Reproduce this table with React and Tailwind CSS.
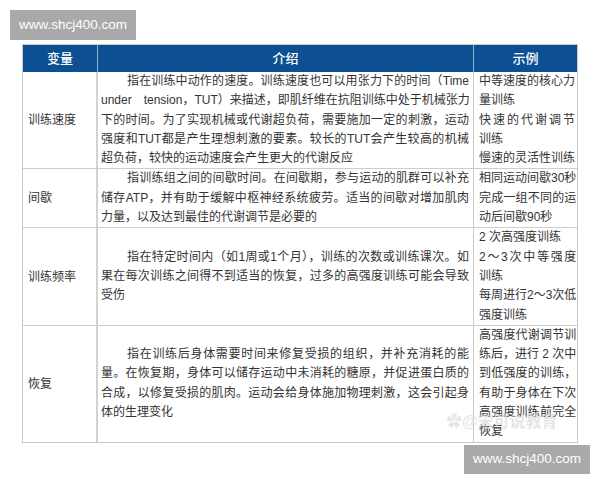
const rows = [
  {
    name: "训练速度",
    intro: [
      "指在训练中动作的速度。训练速度也可以用张力下的时间（Time",
      "under　tension，TUT）来描述，即肌纤维在抗阻训练中处于机械张力",
      "下的时间。为了实现机械或代谢超负荷，需要施加一定的刺激，运动",
      "强度和TUT都是产生理想刺激的要素。较长的TUT会产生较高的机械",
      "超负荷，较快的运动速度会产生更大的代谢反应",
    ],
    example: [
      ["中等速度的核心力", true],
      ["量训练", false],
      ["快速的代谢调节", true],
      ["训练", false],
      ["慢速的灵活性训练", true],
    ],
  },
  {
    name: "间歇",
    intro: [
      "指训练组之间的间歇时间。在间歇期，参与运动的肌群可以补充",
      "储存ATP，并有助于缓解中枢神经系统疲劳。适当的间歇对增加肌肉",
      "力量，以及达到最佳的代谢调节是必要的",
    ],
    example: [
      ["相同运动间歇30秒", true],
      ["完成一组不同的运", true],
      ["动后间歇90秒", false],
    ],
  },
  {
    name: "训练频率",
    intro: [
      "指在特定时间内（如1周或1个月），训练的次数或训练课次。如",
      "果在每次训练之间得不到适当的恢复，过多的高强度训练可能会导致",
      "受伤",
    ],
    example: [
      ["2 次高强度训练", false],
      ["2～3次中等强度", true],
      ["训练", false],
      ["每周进行2～3次低", true],
      ["强度训练", false],
    ],
  },
  {
    name: "恢复",
    intro: [
      "指在训练后身体需要时间来修复受损的组织，并补充消耗的能",
      "量。在恢复期，身体可以储存运动中未消耗的糖原，并促进蛋白质的",
      "合成，以修复受损的肌肉。运动会给身体施加物理刺激，这会引起身",
      "体的生理变化",
    ],
    example: [
      ["高强度代谢调节训", true],
      ["练后，进行 2 次中", true],
      ["到低强度的训练，", true],
      ["有助于身体在下次", true],
      ["高强度训练前完全", true],
      ["恢复", false],
    ],
  },
]

const font = "font-['Liberation_Sans','Noto_Sans_CJK_SC',sans-serif]"

const Line = ({ text, justify, indent }) => (
  <div
    className={`whitespace-nowrap leading-[19.3px] ${justify ? "[text-align-last:justify]" : "text-left"} ${
      indent ? "pl-[26px]" : ""
    }`}
  >
    {text}
  </div>
)

const App = () => {
  return (
    <div className={`relative w-[600px] h-[480px] bg-white pt-[10px] ${font}`}>
      <div className="ml-[10px] w-[126px] h-[30px] bg-[#a9a9a9] flex items-center justify-center text-white text-[13.5px]">
        www.shcj400.com
      </div>

      <div className="mt-[4px] ml-[22px] w-[556px] border border-[#c9c9c9] text-[12px] text-[#333]">
        {/* Header */}
        <div className="grid grid-cols-[75px_376px_1fr] h-[27px] bg-[#0c4f93] text-white text-[13px] font-medium">
          <div className="flex items-center justify-center border-r border-[#8fb0d3]">变量</div>
          <div className="flex items-center justify-center border-r border-[#8fb0d3]">介绍</div>
          <div className="flex items-center justify-center">示例</div>
        </div>

        {rows.map((row, i) => (
          <div
            key={row.name}
            className={`grid grid-cols-[75px_376px_1fr] ${i < rows.length - 1 ? "border-b border-[#cdcdcd]" : ""}`}
          >
            <div className="flex items-center pl-[5px] border-r-2 border-[#d2d2d2]">{row.name}</div>
            <div className="flex flex-col justify-center pl-[3px] pr-[4px] border-r border-[#cdcdcd]">
              {row.intro.map((line, j) => (
                <Line key={j} text={line} indent={j === 0} justify={j < row.intro.length - 1} />
              ))}
            </div>
            <div className="flex flex-col justify-center pl-[5px] pr-[5px]">
              {row.example.map(([line, justify], j) => (
                <Line key={j} text={line} justify={justify} />
              ))}
            </div>
          </div>
        ))}
      </div>

      <div className="mt-[2px] ml-[464px] w-[126px] h-[29px] bg-[#a9a9a9] flex items-center justify-center text-white text-[13.5px]">
        www.shcj400.com
      </div>

      {/* faint image watermark over the last cell */}
      <div className="absolute left-[446px] top-[410px] text-[16px] font-bold text-[#d4d4d4]/60 pointer-events-none">
        ✿@宋可说教育
      </div>
    </div>
  )
}

export default App
